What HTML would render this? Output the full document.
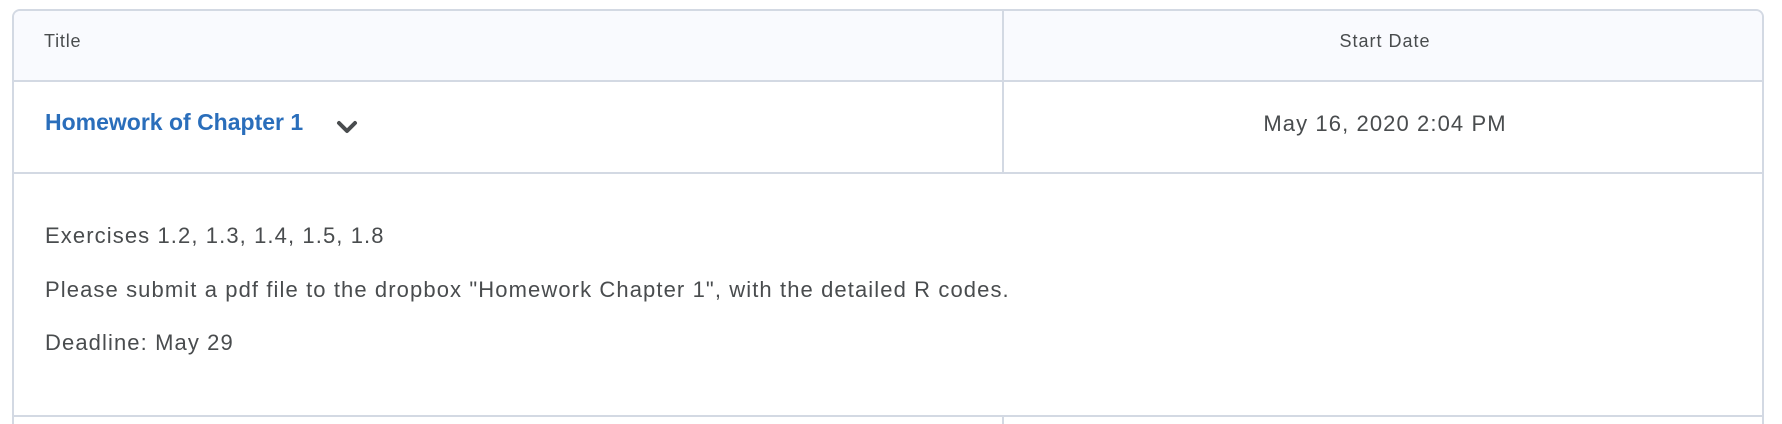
<!DOCTYPE html>
<html><head><meta charset="utf-8"><style>
html,body{margin:0;padding:0;background:#fff;width:1782px;height:424px;overflow:hidden;font-family:"Liberation Sans",sans-serif;color:#494c4e}
.t{position:absolute;left:12px;top:9px;width:1752px;height:415px;border:2px solid #d3d9e3;border-bottom:none;border-radius:8px 8px 0 0;box-sizing:border-box;overflow:hidden}
.hd{position:absolute;left:0;top:0;right:0;height:69px;background:#f9fafe;border-bottom:2px solid #d3d9e3}
.v{position:absolute;left:988px;width:2px;background:#d3d9e3}
.row{position:absolute;left:0;right:0;top:69px;height:92px;border-bottom:2px solid #d3d9e3}
.a{position:absolute;white-space:nowrap}
.b{font-size:22px;letter-spacing:1.1px}
</style></head><body>
<div class="t">
 <div class="hd"></div>
 <div class="v" style="top:0;height:161px"></div>
 <div class="v" style="top:404px;height:20px"></div>
 <div class="row"></div>
 <div class="a" style="left:30px;top:20px;font-size:18px;letter-spacing:0.8px">Title</div>
 <div class="a" style="left:1371px;top:20px;font-size:18px;letter-spacing:1px;transform:translateX(-50%)">Start Date</div>
 <div class="a" style="left:31px;top:98px;font-size:23px;font-weight:bold;color:#2a6ebb">Homework of Chapter 1</div>
 <svg class="a" style="left:322px;top:109px" width="22" height="14" viewBox="0 0 22 14"><path d="M3 3 L11 11 L19 3" fill="none" stroke="#494c4e" stroke-width="4" stroke-linecap="round" stroke-linejoin="round"/></svg>
 <div class="a" style="left:1371px;top:100px;font-size:22px;letter-spacing:1.1px;transform:translateX(-50%)">May 16, 2020 2:04 PM</div>
 <div class="a b" style="left:31px;top:212px">Exercises 1.2, 1.3, 1.4, 1.5, 1.8</div>
 <div class="a b" style="left:31px;top:266px">Please submit a pdf file to the dropbox "Homework Chapter 1", with the detailed R codes.</div>
 <div class="a b" style="left:31px;top:319px">Deadline: May 29</div>
 <div style="position:absolute;left:0;right:0;top:404px;height:2px;background:#d3d9e3"></div>
</div>
</body></html>
